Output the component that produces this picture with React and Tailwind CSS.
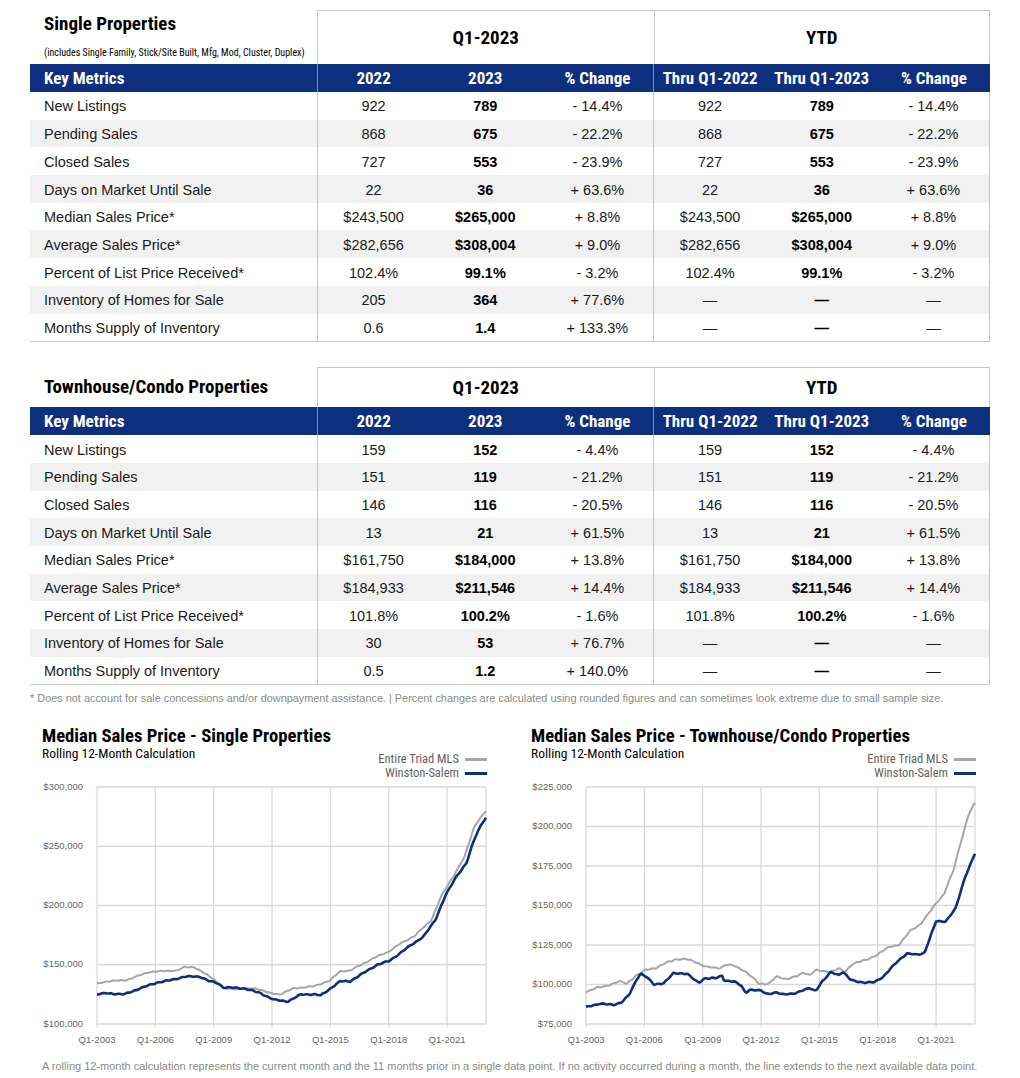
const NARROW = "font-['Liberation_Sans_Narrow','Roboto_Condensed','DejaVu_Sans_Condensed',sans-serif]";
const SANS = "font-['Liberation_Sans',Arial,sans-serif]";
const COLS = 'grid grid-cols-[287px_repeat(6,minmax(0,1fr))]';

const single = [
  ['New Listings', '922', '789', '- 14.4%', '922', '789', '- 14.4%'],
  ['Pending Sales', '868', '675', '- 22.2%', '868', '675', '- 22.2%'],
  ['Closed Sales', '727', '553', '- 23.9%', '727', '553', '- 23.9%'],
  ['Days on Market Until Sale', '22', '36', '+ 63.6%', '22', '36', '+ 63.6%'],
  ['Median Sales Price*', '$243,500', '$265,000', '+ 8.8%', '$243,500', '$265,000', '+ 8.8%'],
  ['Average Sales Price*', '$282,656', '$308,004', '+ 9.0%', '$282,656', '$308,004', '+ 9.0%'],
  ['Percent of List Price Received*', '102.4%', '99.1%', '- 3.2%', '102.4%', '99.1%', '- 3.2%'],
  ['Inventory of Homes for Sale', '205', '364', '+ 77.6%', '—', '—', '—'],
  ['Months Supply of Inventory', '0.6', '1.4', '+ 133.3%', '—', '—', '—'],
]

const condo = [
  ['New Listings', '159', '152', '- 4.4%', '159', '152', '- 4.4%'],
  ['Pending Sales', '151', '119', '- 21.2%', '151', '119', '- 21.2%'],
  ['Closed Sales', '146', '116', '- 20.5%', '146', '116', '- 20.5%'],
  ['Days on Market Until Sale', '13', '21', '+ 61.5%', '13', '21', '+ 61.5%'],
  ['Median Sales Price*', '$161,750', '$184,000', '+ 13.8%', '$161,750', '$184,000', '+ 13.8%'],
  ['Average Sales Price*', '$184,933', '$211,546', '+ 14.4%', '$184,933', '$211,546', '+ 14.4%'],
  ['Percent of List Price Received*', '101.8%', '100.2%', '- 1.6%', '101.8%', '100.2%', '- 1.6%'],
  ['Inventory of Homes for Sale', '30', '53', '+ 76.7%', '—', '—', '—'],
  ['Months Supply of Inventory', '0.5', '1.2', '+ 140.0%', '—', '—', '—'],
]

const heads = ['Key Metrics', '2022', '2023', '% Change', 'Thru Q1-2022', 'Thru Q1-2023', '% Change']

function MetricsTable({ title, subtitle, rows }) {
  return (
    <div className="w-[960px]">
      <div className={`${COLS} ${subtitle ? 'h-[54px]' : 'h-[40px]'}`}>
        {subtitle ? (
          <div className="flex flex-col pl-[14px] pt-[4px] pb-[4px]">
            <div className={`${NARROW} text-[19px] font-bold leading-[20px] text-black`}>{title}</div>
            <div className={`${NARROW} mt-auto text-[10px] leading-[14px] text-black`}>{subtitle}</div>
          </div>
        ) : (
          <div className={`${NARROW} flex items-center pl-[14px] text-[19px] font-bold text-black`}>{title}</div>
        )}
        <div className={`${NARROW} col-span-3 flex items-center justify-center border-l border-t border-[#c6c6c6] pt-[2px] text-[19px] font-bold text-black`}>
          Q1-2023
        </div>
        <div className={`${NARROW} col-span-3 flex items-center justify-center border-l border-r border-t border-[#c6c6c6] pt-[2px] text-[19px] font-bold text-black`}>
          YTD
        </div>
      </div>

      <div className={`${COLS} h-[28px] bg-[#0e2f7d] text-white`}>
        {heads.map((h, i) => (
          <div
            key={i}
            className={`${NARROW} flex items-center pt-[2px] text-[17px] font-bold ${i === 0 ? 'pl-[14px]' : 'justify-center'} ${i === 1 || i === 4 ? 'border-l border-[#7d8fb8]' : ''}`}
          >
            {h}
          </div>
        ))}
      </div>

      <div className="border-b border-[#c6c6c6]">
        {rows.map((r, ri) => (
          <div key={ri} className={`${COLS} h-[27.7px] ${ri % 2 === 1 ? 'bg-[#f1f1f1]' : 'bg-white'}`}>
            {r.map((c, i) => (
              <div
                key={i}
                className={`${SANS} flex items-center pt-[3px] text-[14.5px] text-[#1a1a1a] ${i === 0 ? 'pl-[14px]' : 'justify-center'} ${i === 2 || i === 5 ? 'font-bold text-black' : ''} ${i === 1 || i === 4 ? 'border-l border-[#c6c6c6]' : ''} ${i === 6 ? 'border-r border-[#c6c6c6]' : ''}`}
              >
                {c}
              </div>
            ))}
          </div>
        ))}
      </div>
    </div>
  )
}

function series(points, noise, seed) {
  const out = []
  for (let i = 0; i <= 240; i++) {
    const t = 2003 + i / 12
    let j = 0
    while (j < points.length - 2 && points[j + 1][0] < t) j++
    const [t0, v0] = points[j]
    const [t1, v1] = points[j + 1]
    const f = Math.min(1, Math.max(0, (t - t0) / (t1 - t0)))
    let v = v0 + (v1 - v0) * f
    v += noise * (Math.sin(i * 1.3 + seed) * 0.6 + Math.sin(i * 0.47 + seed * 2) * 0.4)
    out.push([t, v])
  }
  return out
}

const singleTriad = series([
  [2003, 134], [2003.5, 136], [2004.5, 137], [2005.7, 144], [2006.8, 145], [2007.1, 145], [2007.5, 148],
  [2008, 148], [2009, 138], [2009.5, 130], [2010.2, 129.5], [2011.2, 130], [2011.9, 126], [2012.4, 125],
  [2013.1, 130], [2014.2, 132], [2015, 137], [2015.5, 144.5], [2016, 145], [2016.7, 151], [2017.4, 157],
  [2018, 161], [2018.6, 168], [2019.3, 174], [2020.2, 188], [2020.7, 208], [2021.4, 227], [2021.9, 241],
  [2022.4, 267], [2023, 280],
], 0.5, 1)

const singleWs = series([
  [2003, 125], [2003.5, 126], [2004.4, 125], [2005.2, 130], [2006.1, 135], [2006.8, 137], [2007.5, 140],
  [2008.3, 140], [2008.8, 136], [2009.2, 134.5], [2009.5, 131], [2010.6, 130], [2011.4, 126], [2012.1, 120.5],
  [2012.8, 119], [2013.5, 125], [2014.2, 125], [2014.5, 124], [2015, 130], [2015.5, 136], [2016, 136],
  [2016.7, 143], [2017.4, 150], [2018, 153], [2018.6, 160], [2019.1, 166], [2019.8, 174], [2020.4, 188],
  [2020.9, 208], [2021.5, 225], [2022, 236], [2022.4, 256], [2022.8, 270], [2023, 274],
], 0.6, 3)

const condoTriad = series([
  [2003, 95.3], [2003.5, 97.8], [2004, 98.9], [2004.7, 102], [2005.1, 100.5], [2005.5, 105], [2006.1, 109.4],
  [2006.6, 110.5], [2007.1, 113.6], [2007.6, 116], [2008.2, 116], [2008.7, 114], [2009.2, 111], [2009.9, 110.5],
  [2010.2, 112.5], [2010.6, 112], [2011.1, 109], [2011.6, 104], [2011.9, 100.5], [2012.4, 100.5], [2012.8, 105],
  [2013.3, 103.5], [2013.8, 105], [2014.2, 107.7], [2014.5, 106], [2014.8, 109], [2015.6, 108], [2016, 110],
  [2016.3, 108], [2016.7, 113], [2017.4, 115.6], [2018, 119], [2018.6, 124], [2019.1, 125], [2019.7, 134.5],
  [2020.2, 138], [2021, 151.6], [2021.4, 156.8], [2021.9, 172.7], [2022.2, 187], [2022.7, 208.5], [2023, 215],
], 0.5, 5)

const condoWs = series([
  [2003, 85.5], [2003.7, 88], [2004.4, 87], [2004.8, 88.7], [2005.2, 93], [2005.6, 103], [2005.8, 107],
  [2006.1, 105], [2006.5, 99.8], [2007, 101], [2007.5, 107], [2008.2, 107], [2008.6, 102.6], [2008.8, 101],
  [2009.1, 104], [2009.7, 104], [2010, 105.6], [2010.1, 102.6], [2010.6, 102], [2011, 99], [2011.2, 94.6],
  [2011.4, 96.8], [2012, 96], [2012.3, 94], [2012.8, 95], [2013.1, 93.6], [2013.8, 94.6], [2014.5, 97.8],
  [2014.8, 96], [2015.1, 101], [2015.6, 108], [2016, 106], [2016.2, 108], [2016.6, 103], [2017.3, 101],
  [2017.8, 101.5], [2018.3, 105], [2019, 114.6], [2019.5, 119.5], [2020, 118.9], [2020.4, 120], [2021, 140],
  [2021.5, 140], [2022, 148], [2022.5, 168.5], [2023, 182.8],
], 0.45, 7)

const X0 = 55
const X1 = 444
const Y0 = 7
const Y1 = 244
const years = [2003, 2006, 2009, 2012, 2015, 2018, 2021]

function Chart({ title, ticks, vmin, vmax, triad, ws }) {
  const sx = (t) => X0 + ((t - 2003) / 20) * (X1 - X0)
  const sy = (v) => Y0 + ((vmax - v) / (vmax - vmin)) * (Y1 - Y0)
  const pts = (s) => s.map(([t, v]) => `${sx(t).toFixed(1)},${sy(v).toFixed(1)}`).join(' ')
  return (
    <div className="w-[445px]">
      <div className={`${NARROW} text-[18.7px] font-bold leading-[20px] text-black`}>{title}</div>
      <div className="flex items-start justify-between">
        <div className={`${NARROW} text-[13.5px] leading-[14px] text-black`}>Rolling 12-Month Calculation</div>
        <div className={`${NARROW} flex flex-col items-end pt-[6px] text-[12.5px] leading-[14px] text-[#5f5f5f]`}>
          <div className="flex items-center gap-[6px]">
            Entire Triad MLS
            <span className="h-[3px] w-[22px] bg-[#a6a6a6]" />
          </div>
          <div className="flex items-center gap-[6px]">
            Winston-Salem
            <span className="h-[3px] w-[22px] bg-[#0e2f7d]" />
          </div>
        </div>
      </div>
      <svg width="445" height="270" className="block">
        {ticks.map((v) => (
          <g key={v}>
            <line x1={X0} x2={X1} y1={sy(v / 1000)} y2={sy(v / 1000)} stroke="#d9d9d9" strokeWidth="1.3" />
            <text
              x={41}
              y={sy(v / 1000)}
              textAnchor="end"
              dominantBaseline="middle"
              fontSize="9.5"
              fill="#666"
              fontFamily="'Liberation Sans', Arial, sans-serif"
            >
              ${v.toLocaleString('en-US')}
            </text>
          </g>
        ))}
        {years.map((y) => (
          <g key={y}>
            <line x1={sx(y)} x2={sx(y)} y1={Y0} y2={Y1 + 3} stroke="#d9d9d9" strokeWidth="1.3" />
            <text
              x={sx(y)}
              y={260}
              textAnchor="middle"
              dominantBaseline="middle"
              fontSize="9.5"
              fill="#666"
              fontFamily="'Liberation Sans', Arial, sans-serif"
            >
              Q1-{y}
            </text>
          </g>
        ))}
        <line x1={X1} x2={X1} y1={Y0} y2={Y1} stroke="#d9d9d9" strokeWidth="1.3" />
        <polyline points={pts(triad)} fill="none" stroke="#a6a6a6" strokeWidth="2" strokeLinejoin="round" />
        <polyline points={pts(ws)} fill="none" stroke="#0e2f7d" strokeWidth="2.6" strokeLinejoin="round" />
      </svg>
    </div>
  )
}

export default function App() {
  return (
    <div className="h-[1078px] w-[1020px] overflow-hidden bg-white pt-[10px]">
      <div className="pl-[30px]">
        <MetricsTable
          title="Single Properties"
          subtitle="(includes Single Family, Stick/Site Built, Mfg, Mod, Cluster, Duplex)"
          rows={single}
        />
        <div className="mt-[25px]">
          <MetricsTable title="Townhouse/Condo Properties" rows={condo} />
        </div>
        <p className={`${SANS} mt-[6px] text-[10.9px] leading-[14px] text-[#8a8a8a]`}>
          * Does not account for sale concessions and/or downpayment assistance. | Percent changes are calculated using rounded figures and can sometimes look extreme due to small sample size.
        </p>
      </div>

      <div className="mt-[21px] flex gap-[44px] pl-[42px]">
        <Chart
          title="Median Sales Price - Single Properties"
          ticks={[300000, 250000, 200000, 150000, 100000]}
          vmin={100}
          vmax={300}
          triad={singleTriad}
          ws={singleWs}
        />
        <Chart
          title="Median Sales Price - Townhouse/Condo Properties"
          ticks={[225000, 200000, 175000, 150000, 125000, 100000, 75000]}
          vmin={75}
          vmax={225}
          triad={condoTriad}
          ws={condoWs}
        />
      </div>

      <p className={`${SANS} mt-[9px] pl-[42px] text-[11px] leading-[14px] text-[#8a8a8a]`}>
        A rolling 12-month calculation represents the current month and the 11 months prior in a single data point. If no activity occurred during a month, the line extends to the next available data point.
      </p>
    </div>
  )
}
